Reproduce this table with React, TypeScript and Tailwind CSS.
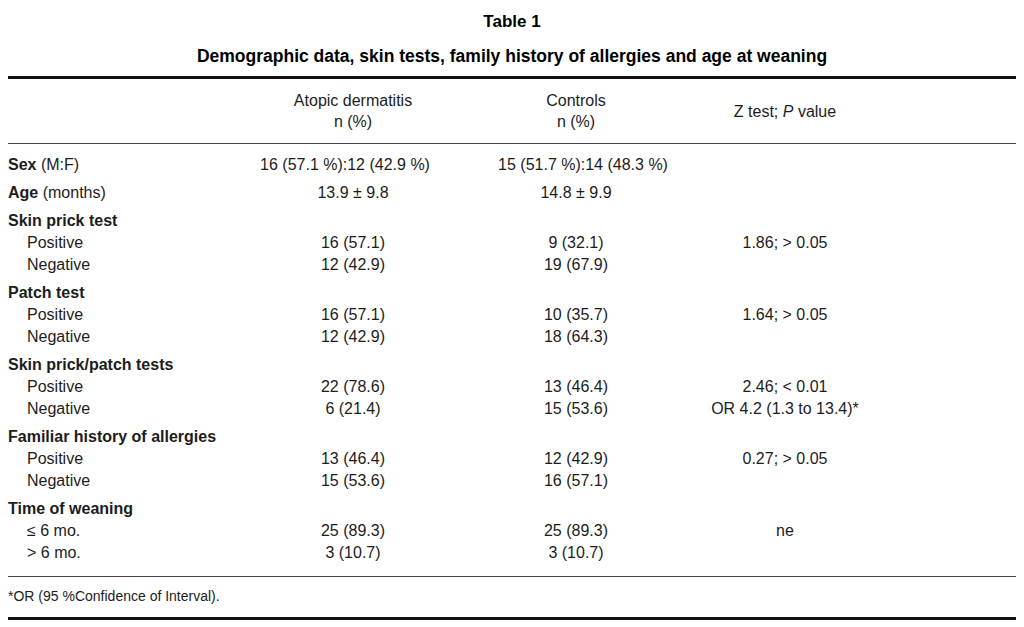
const font = { fontFamily: '"Liberation Sans", Arial, sans-serif' };

type Row = { label: string; a?: string; c?: string; z?: string };
type Group = { title: string; note?: string; rows: Row[]; a?: string; c?: string };

const groups: Group[] = [
  { title: "Sex", note: "(M:F)", rows: [], a: "16 (57.1 %):12 (42.9 %)", c: "15 (51.7 %):14 (48.3 %)" },
  { title: "Age", note: "(months)", rows: [], a: "13.9 ± 9.8", c: "14.8 ± 9.9" },
  {
    title: "Skin prick test",
    rows: [
      { label: "Positive", a: "16 (57.1)", c: "9 (32.1)", z: "1.86; > 0.05" },
      { label: "Negative", a: "12 (42.9)", c: "19 (67.9)" },
    ],
  },
  {
    title: "Patch test",
    rows: [
      { label: "Positive", a: "16 (57.1)", c: "10 (35.7)", z: "1.64; > 0.05" },
      { label: "Negative", a: "12 (42.9)", c: "18 (64.3)" },
    ],
  },
  {
    title: "Skin prick/patch tests",
    rows: [
      { label: "Positive", a: "22 (78.6)", c: "13 (46.4)", z: "2.46; < 0.01" },
      { label: "Negative", a: "6 (21.4)", c: "15 (53.6)", z: "OR 4.2 (1.3 to 13.4)*" },
    ],
  },
  {
    title: "Familiar history of allergies",
    rows: [
      { label: "Positive", a: "13 (46.4)", c: "12 (42.9)", z: "0.27; > 0.05" },
      { label: "Negative", a: "15 (53.6)", c: "16 (57.1)" },
    ],
  },
  {
    title: "Time of weaning",
    rows: [
      { label: "≤ 6 mo.", a: "25 (89.3)", c: "25 (89.3)", z: "ne" },
      { label: "> 6 mo.", a: "3 (10.7)", c: "3 (10.7)" },
    ],
  },
];

const cols = "grid grid-cols-[232px_226px_220px_198px_1fr]";

function GroupBlock({ g, first }: { g: Group; first: boolean }) {
  const isSex = g.title === "Sex";
  return (
    <div className={first ? "" : "mt-[6px]"}>
      {/* group heading, Sex / Age carry their values on the same line */}
      <div className={`${cols} h-[22px] leading-[22px]`}>
        <div>
          <span className="font-bold">{g.title}</span>
          {g.note && <span> {g.note}</span>}
        </div>
        <div className={`text-center ${isSex ? "pr-[16px]" : ""}`}>{g.a}</div>
        <div className={`text-center ${isSex ? "pl-[14px]" : ""}`}>{g.c}</div>
        <div />
        <div />
      </div>
      {g.rows.map((r, i) => (
        <div key={i} className={`${cols} h-[22px] leading-[22px]`}>
          <div className="pl-[19px]">{r.label}</div>
          <div className="text-center">{r.a}</div>
          <div className="text-center">{r.c}</div>
          <div className="text-center">{r.z}</div>
          <div />
        </div>
      ))}
    </div>
  );
}

export default function App() {
  return (
    <div className="w-[1024px] h-[627px] bg-white text-[#1c1c1c] overflow-hidden" style={font}>
      <div className="px-2">
        {/* Caption */}
        <div className="pt-[12px] text-center font-bold text-[17px] leading-[20px] text-black">Table 1</div>
        <div className="mt-[13px] text-center font-bold text-[17.5px] leading-[22px] text-black">
          Demographic data, skin tests, family history of allergies and age at weaning
        </div>

        <div className="mt-[9px] h-[3px] bg-[#111]" />

        {/* Header */}
        <div className={`${cols} pt-[11px] pb-[11px] text-[16px] leading-[21px]`}>
          <div />
          <div className="text-center">
            Atopic dermatitis
            <br />n (%)
          </div>
          <div className="text-center">
            Controls
            <br />n (%)
          </div>
          <div className="flex items-center justify-center">
            <span>
              Z test; <i>P</i> value
            </span>
          </div>
          <div />
        </div>

        <div className="h-px bg-[#444]" />

        {/* Body */}
        <div className="pt-[10px] text-[16px]">
          {groups.map((g, i) => (
            <GroupBlock key={i} g={g} first={i === 0} />
          ))}
        </div>

        <div className="mt-[12px] h-px bg-[#444]" />

        <div className="pt-[10px] text-[14px] leading-[19px]">*OR (95 %Confidence of Interval).</div>

        <div className="mt-[11px] h-[3px] bg-[#111]" />
      </div>
    </div>
  );
}
